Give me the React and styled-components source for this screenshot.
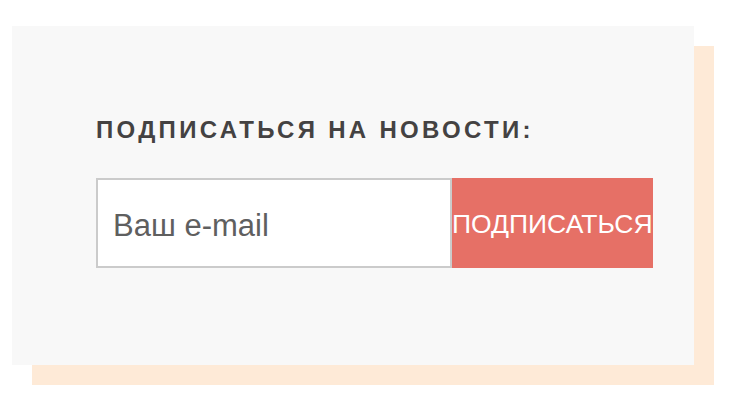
import styled, { createGlobalStyle } from 'styled-components'

const GlobalStyle = createGlobalStyle`
  body {
    margin: 0;
    background: #fff;
    font-family: "Liberation Sans", Arial, sans-serif;
  }
`

const Page = styled.div`
  padding: 26px 0 40px 12px;
`

const Panel = styled.section`
  width: 682px;
  height: 339px;
  box-sizing: border-box;
  padding: 91px 0 0 84px;
  background: #f8f8f8;
  box-shadow: 20px 20px 0 #feead7;
`

const Title = styled.h3`
  margin: 0 0 36px;
  font-size: 24px;
  line-height: 25px;
  font-weight: 700;
  letter-spacing: 3.3px;
  text-transform: uppercase;
  color: #444242;
`

const Form = styled.form`
  display: flex;
  width: 556px;
  height: 90px;
`

const EmailInput = styled.input`
  flex: 0 0 356px;
  min-width: 0;
  box-sizing: border-box;
  height: 100%;
  margin: 0;
  padding: 5px 15px 0;
  border: 2px solid #cbcbcb;
  background: #fff;
  font-family: inherit;
  font-size: 31px;
  color: #5f5f5f;
  outline: none;
  &::placeholder {
    color: #5f5f5f;
    opacity: 1;
  }
`

const SubmitButton = styled.button`
  flex: 0 0 200px;
  height: 100%;
  margin: 0;
  padding: 2px 0 0;
  border: none;
  background: #e67066;
  color: #fff;
  font-family: inherit;
  font-size: 26.5px;
  text-transform: uppercase;
  white-space: nowrap;
  cursor: pointer;
`

export default function App() {
  return (
    <>
      <GlobalStyle />
      <Page>
        <Panel>
          <Title>Подписаться на новости:</Title>
          <Form onSubmit={(e) => e.preventDefault()}>
            <EmailInput type="email" placeholder="Ваш e-mail" />
            <SubmitButton type="submit">Подписаться</SubmitButton>
          </Form>
        </Panel>
      </Page>
    </>
  )
}
